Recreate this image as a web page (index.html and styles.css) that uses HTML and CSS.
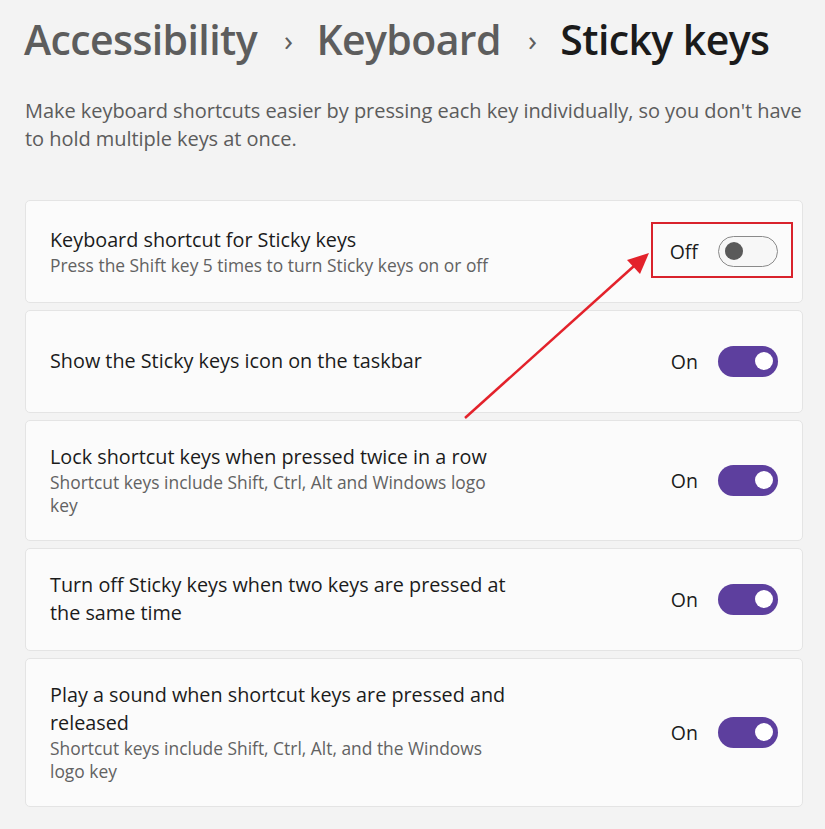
FILE: index.html
```html
<!DOCTYPE html>
<html lang="en">
<head>
<meta charset="utf-8">
<title>Sticky keys</title>
<link rel="stylesheet" href="styles.css">
</head>
<body>
<div class="page">
  <h1 class="crumbs">
    <span class="crumb">Accessibility</span>
    <span class="chev">›</span>
    <span class="crumb">Keyboard</span>
    <span class="chev">›</span>
    <span class="crumb current">Sticky keys</span>
  </h1>
  <p class="desc">Make keyboard shortcuts easier by pressing each key individually, so you don't have to hold multiple keys at once.</p>

  <div class="cards">
    <div class="card">
      <div class="text">
        <div class="title">Keyboard shortcut for Sticky keys</div>
        <div class="sub">Press the Shift key 5 times to turn Sticky keys on or off</div>
      </div>
      <div class="control highlighted">
        <span class="state">Off</span>
        <span class="toggle off"><span class="knob"></span></span>
      </div>
    </div>

    <div class="card">
      <div class="text">
        <div class="title">Show the Sticky keys icon on the taskbar</div>
      </div>
      <div class="control">
        <span class="state">On</span>
        <span class="toggle on"><span class="knob"></span></span>
      </div>
    </div>

    <div class="card">
      <div class="text">
        <div class="title">Lock shortcut keys when pressed twice in a row</div>
        <div class="sub">Shortcut keys include Shift, Ctrl, Alt and Windows logo key</div>
      </div>
      <div class="control">
        <span class="state">On</span>
        <span class="toggle on"><span class="knob"></span></span>
      </div>
    </div>

    <div class="card">
      <div class="text">
        <div class="title">Turn off Sticky keys when two keys are pressed at the same time</div>
      </div>
      <div class="control">
        <span class="state">On</span>
        <span class="toggle on"><span class="knob"></span></span>
      </div>
    </div>

    <div class="card">
      <div class="text">
        <div class="title">Play a sound when shortcut keys are pressed and released</div>
        <div class="sub">Shortcut keys include Shift, Ctrl, Alt, and the Windows logo key</div>
      </div>
      <div class="control">
        <span class="state">On</span>
        <span class="toggle on"><span class="knob"></span></span>
      </div>
    </div>
  </div>

  <svg class="arrow" width="825" height="829" viewBox="0 0 825 829">
    <line x1="465" y1="418" x2="634" y2="266" stroke="#e3222b" stroke-width="2.5"/>
    <polygon points="649,253 627,260 640,274" fill="#e3222b"/>
  </svg>
</div>
</body>
</html>
```

FILE: styles.css
```css
html, body {
  margin: 0;
  padding: 0;
  background: #f3f3f3;
}

.page {
  position: relative;
  width: 825px;
  height: 829px;
  box-sizing: border-box;
  padding: 12px 22px 0 25px;
  font-family: "Open Sans", "Noto Sans", sans-serif;
  overflow: hidden;
}

.crumbs {
  margin: 0 0 0 -1px;
  display: flex;
  align-items: baseline;
  font-size: 41px;
  font-weight: 600;
  line-height: 54px;
  letter-spacing: -0.6px;
  color: #5d5d5d;
}

.chev {
  font-size: 30px;
  font-weight: 400;
  margin: 0 24px 0 27px;
  color: #5f5f5f;
  position: relative;
  top: -4px;
}

.current {
  color: #1b1b1b;
}

.desc {
  margin: 26px -6px 0 0;
  font-size: 20px;
  line-height: 28px;
  color: #5c5c5c;
  letter-spacing: -0.05px;
}

.cards {
  margin-top: 47px;
  display: flex;
  flex-direction: column;
  gap: 7px;
}

.card {
  box-sizing: border-box;
  min-height: 103px;
  background: #fbfbfb;
  border: 1px solid #e4e4e4;
  border-radius: 5px;
  padding: 22px 24px 23px 24px;
  display: flex;
  align-items: center;
  justify-content: space-between;
}

.text {
  width: 465px;
}

.title {
  font-size: 19.8px;
  line-height: 28px;
  color: #1b1b1b;
}

.sub {
  font-size: 17.4px;
  line-height: 23px;
  color: #626262;
}

.control {
  position: relative;
  display: flex;
  align-items: center;
  gap: 20px;
}

.highlighted::after {
  content: "";
  position: absolute;
  left: -19px;
  right: -15px;
  top: -14px;
  bottom: -11px;
  border: 2px solid #d9232c;
}

.state {
  font-size: 19.5px;
  color: #1b1b1b;
}

.toggle {
  box-sizing: border-box;
  width: 60px;
  height: 31px;
  border-radius: 16px;
  display: flex;
  align-items: center;
  padding: 0 5px;
}

.toggle.off {
  border: 1.5px solid #8a8a8a;
  background: #f7f7f7;
  justify-content: flex-start;
}

.toggle.on {
  background: #5d3f9e;
  justify-content: flex-end;
}

.knob {
  width: 18px;
  height: 18px;
  border-radius: 50%;
}

.off .knob {
  background: #5a5a5a;
  margin-left: 0.5px;
}

.on .knob {
  background: #ffffff;
  margin-right: 0;
}

.arrow {
  position: absolute;
  left: 0;
  top: 0;
  pointer-events: none;
}
```
